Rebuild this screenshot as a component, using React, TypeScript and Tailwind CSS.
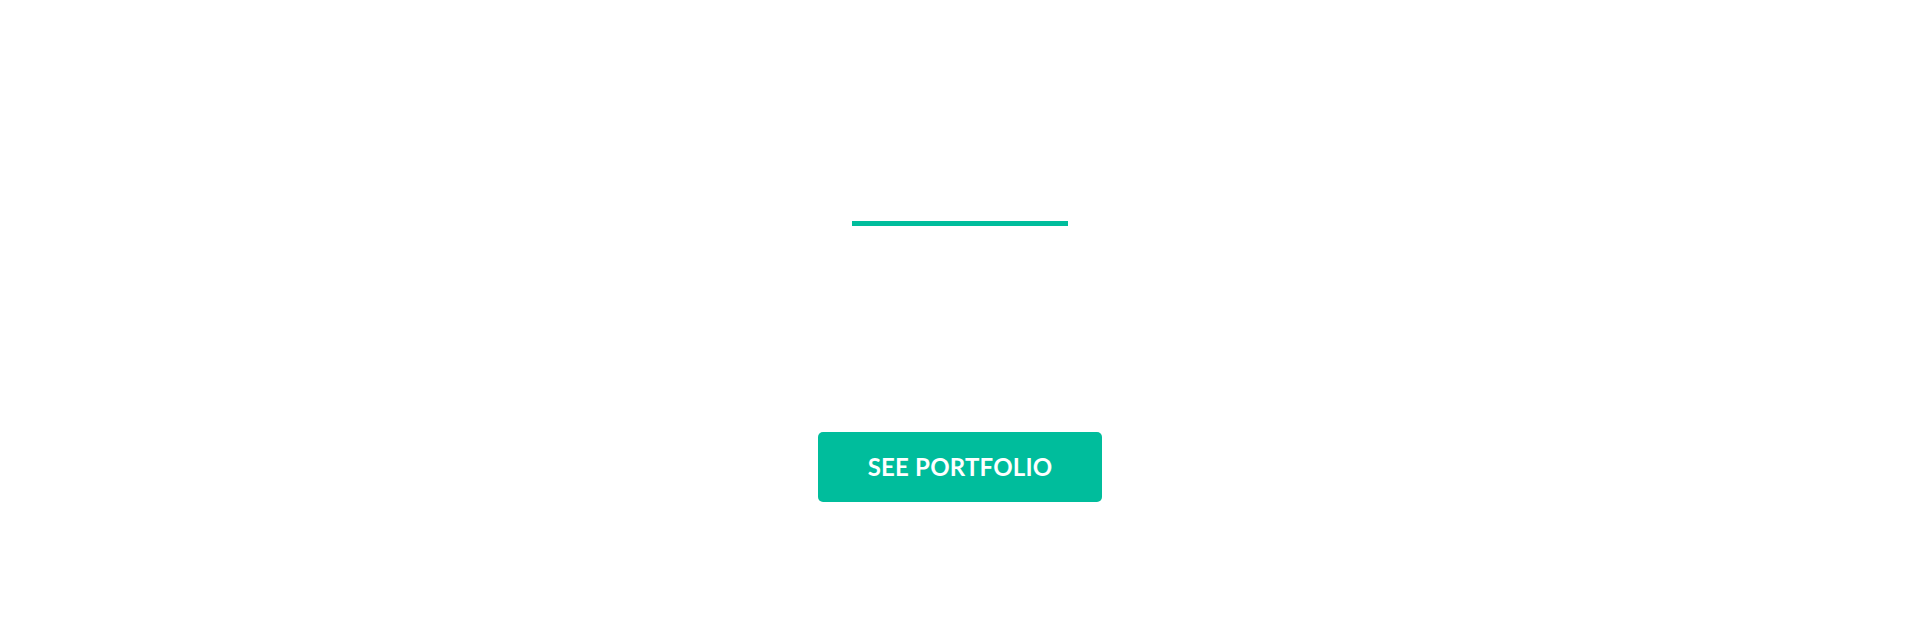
import React from 'react';

export default function App() {
  return (
    <div className="w-full h-[622px] bg-white flex flex-col items-center font-['Lato',sans-serif]">
      <div className="mt-[221px] w-[216px] h-[5px] bg-[#00bd9c]" />
      <a
        href="#"
        className="mt-[206px] w-[284px] h-[70px] flex items-center justify-center rounded-[5px] bg-[#00bd9c] text-white text-[24px] font-bold tracking-[0.2px]"
      >
        SEE PORTFOLIO
      </a>
    </div>
  );
}
